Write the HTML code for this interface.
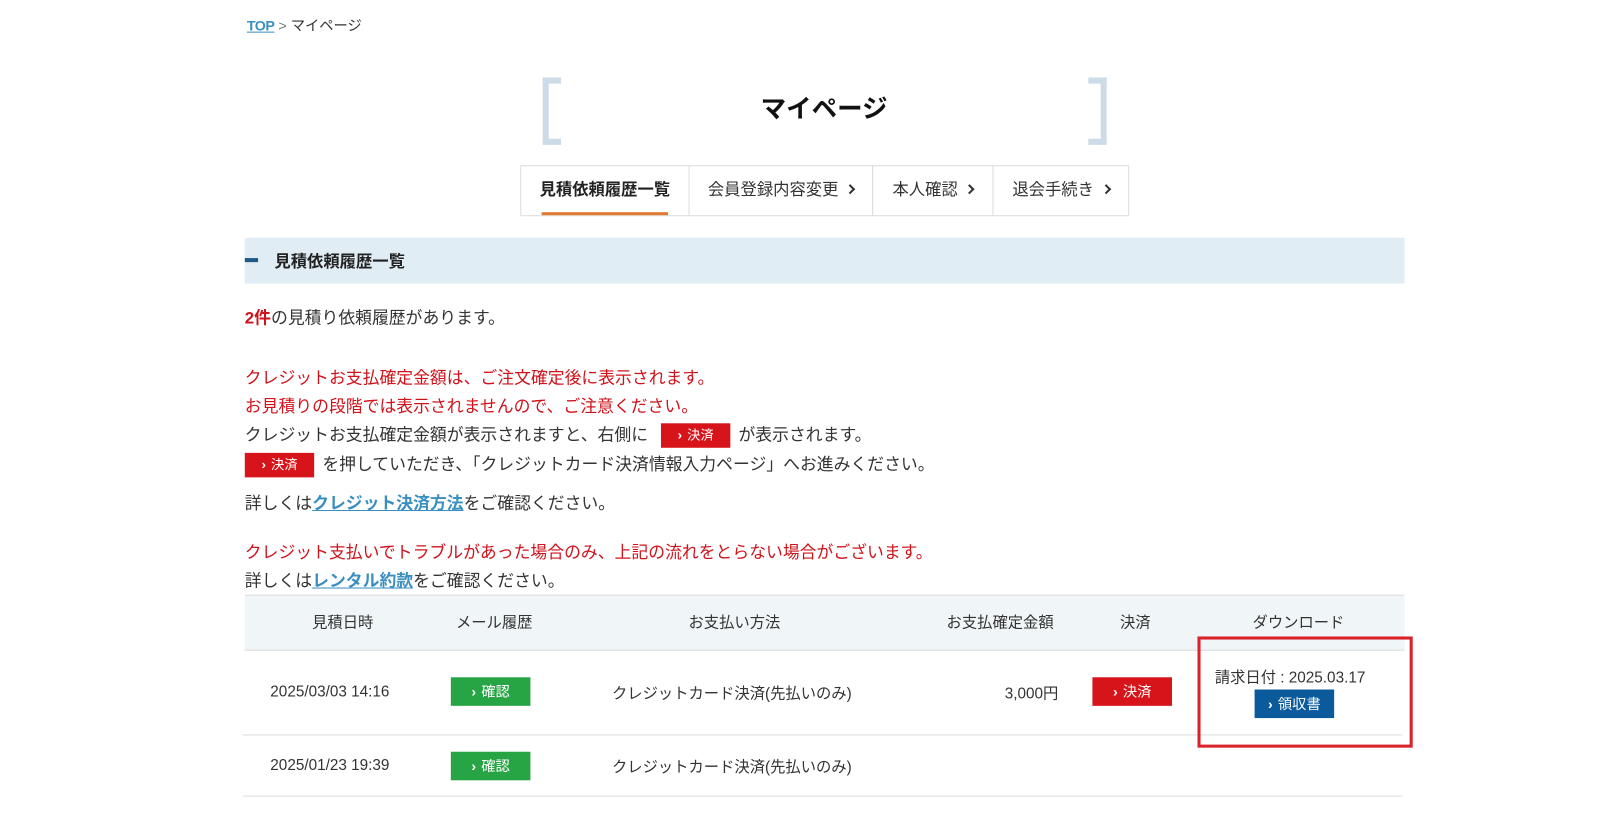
<!DOCTYPE html>
<html><head><meta charset="utf-8"><style>
*{margin:0;padding:0;box-sizing:border-box}
body{width:1600px;height:840px;background:#fff;font-family:"Liberation Sans","Noto Sans CJK JP",sans-serif;color:#333;overflow:hidden}
#w{position:absolute;left:0;top:0;width:1565px;height:822px;transform:scale(1.02);transform-origin:0 0}
.a{position:absolute;white-space:nowrap}
.red{color:#d0121b}
.lnk{color:#3a8fc0;text-decoration:underline;font-weight:bold}
.btn{position:absolute;color:#fff;font-size:14px;text-align:center;line-height:28px;height:28px}
.btn:before{content:"›";font-weight:bold;margin-right:5px}
.g{background:#27a544}.r{background:#d7141a}.b{background:#0a5a9c}
.tab{position:absolute;top:162px;height:50px;border:1px solid #ddd;font-size:16px;line-height:48px;text-align:center}
.ch{display:inline-block;width:7px;height:7px;border-top:2px solid #333;border-right:2px solid #333;transform:rotate(45deg);margin-left:8px;vertical-align:2px}
.t{font-size:16.5px}
</style></head><body><div id="w">
<div class="a" style="left:242px;top:15px;font-size:14px"><span style="color:#3a8fc0;text-decoration:underline;font-weight:bold;letter-spacing:-0.5px">TOP</span> <span style="color:#777">&gt;</span> マイページ</div>

<div class="a" style="left:532px;top:76px;width:18px;height:66px;border:6px solid #cddbe8;border-right:none"></div>
<div class="a" style="left:1067px;top:76px;width:18px;height:66px;border:6px solid #cddbe8;border-left:none"></div>
<div class="a" style="left:0;width:1616px;top:87px;text-align:center;font-size:25px;font-weight:bold;color:#111">マイページ</div>

<div class="tab" style="left:510px;width:166px;font-weight:bold;color:#222">見積依頼履歴一覧<div style="position:absolute;left:20px;right:20px;bottom:0;height:3px;background:#e07a35"></div></div>
<div class="tab" style="left:675px;width:181px">会員登録内容変更<span class="ch"></span></div>
<div class="tab" style="left:855px;width:119px">本人確認<span class="ch"></span></div>
<div class="tab" style="left:973px;width:134px">退会手続き<span class="ch"></span></div>

<div class="a" style="left:240px;top:233px;width:1137px;height:45px;background:#e0edf5"></div>
<div class="a" style="left:240px;top:253px;width:13px;height:4px;background:#1f5a86"></div>
<div class="a" style="left:269px;top:243px;font-size:16px;font-weight:bold;color:#222">見積依頼履歴一覧</div>

<div class="a t" style="left:240px;top:298px"><b class="red">2件</b>の見積り依頼履歴があります。</div>
<div class="a t red" style="left:240px;top:357px">クレジットお支払確定金額は、ご注文確定後に表示されます。</div>
<div class="a t red" style="left:240px;top:385px">お見積りの段階では表示されませんので、ご注意ください。</div>
<div class="a t" style="left:240px;top:413px">クレジットお支払確定金額が表示されますと、右側に</div>
<div class="btn r" style="left:648px;top:415px;width:68px;height:24px;line-height:24px;font-size:13px">決済</div>
<div class="a t" style="left:724px;top:413px">が表示されます。</div>
<div class="btn r" style="left:240px;top:444px;width:68px;height:24px;line-height:24px;font-size:13px">決済</div>
<div class="a t" style="left:316px;top:442px">を押していただき、「クレジットカード決済情報入力ページ」へお進みください。</div>
<div class="a t" style="left:240px;top:480px">詳しくは<span class="lnk">クレジット決済方法</span>をご確認ください。</div>
<div class="a t red" style="left:240px;top:528px">クレジット支払いでトラブルがあった場合のみ、上記の流れをとらない場合がございます。</div>
<div class="a t" style="left:240px;top:556px">詳しくは<span class="lnk">レンタル約款</span>をご確認ください。</div>

<div class="a" style="left:240px;top:583px;width:1137px;height:55px;background:#f0f5f8;border-top:1px solid #ddd;border-bottom:1px solid #ddd"></div>
<div class="a" style="left:238px;top:720px;width:1137px;height:1px;background:#ddd"></div>
<div class="a" style="left:238px;top:780px;width:1137px;height:1px;background:#ddd"></div>
<div style="font-size:15px">
<div class="a" style="left:306px;top:599px">見積日時</div>
<div class="a" style="left:447px;top:599px">メール履歴</div>
<div class="a" style="left:675px;top:599px">お支払い方法</div>
<div class="a" style="left:928px;top:599px">お支払確定金額</div>
<div class="a" style="left:1098px;top:599px">決済</div>
<div class="a" style="left:1228px;top:599px">ダウンロード</div>
<div class="a" style="left:265px;top:670px">2025/03/03 14:16</div>
<div class="a" style="left:600px;top:669px">クレジットカード決済(先払いのみ)</div>
<div class="a" style="left:985px;top:669px">3,000円</div>
<div class="a" style="left:1191px;top:653px">請求日付 : 2025.03.17</div>
<div class="a" style="left:265px;top:742px">2025/01/23 19:39</div>
<div class="a" style="left:600px;top:741px">クレジットカード決済(先払いのみ)</div>
</div>
<div class="btn g" style="left:442px;top:664px;width:78px">確認</div>
<div class="btn r" style="left:1071px;top:664px;width:78px">決済</div>
<div class="btn b" style="left:1230px;top:676px;width:78px">領収書</div>
<div class="btn g" style="left:442px;top:737px;width:78px">確認</div>
<div class="a" style="left:1174px;top:624px;width:211px;height:109px;border:3px solid #d9222a"></div>
</div></body></html>
